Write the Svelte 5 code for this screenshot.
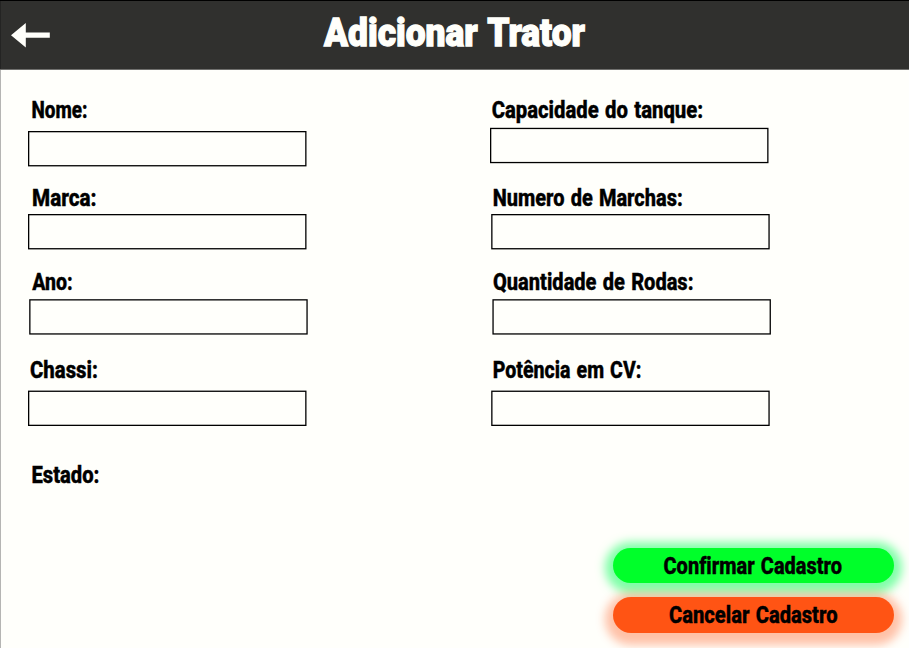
<script>
  const columns = [
    [
      { label: 'Nome:', lx: 31.5, lw: 56, bx: 28, by: 41 },
      { label: 'Marca:', lx: 32, lw: 64.5, bx: 28, by: 36 },
      { label: 'Ano:', lx: 32.3, lw: 40.5, bx: 29.2, by: 37.2 },
      { label: 'Chassi:', lx: 30, lw: 68, bx: 28, by: 40.6 },
      { label: 'Estado:', lx: 31.5, lw: 68 }
    ],
    [
      { label: 'Capacidade do tanque:', lx: 37.7, lw: 211.5, bx: 36, by: 37.8 },
      { label: 'Numero de Marchas:', lx: 38.7, lw: 190, bx: 37.2, by: 36 },
      { label: 'Quantidade de Rodas:', lx: 39, lw: 200.5, bx: 38.4, by: 37.2 },
      { label: 'Potência em CV:', lx: 38.7, lw: 148.8, bx: 37.2, by: 40.6 }
    ]
  ];
</script>

<main>
  <header>
    <svg class="back" width="40" height="26" viewBox="0 0 40 26" role="img" aria-label="Voltar">
      <path d="M0 12.2 L14.8 0 V9.4 H38.8 V14.8 H14.8 V24.4 Z" />
    </svg>
    <h1>
      <svg width="264" height="44">
        <text class="title" x="1" y="34" textLength="261" lengthAdjust="spacingAndGlyphs">Adicionar Trator</text>
      </svg>
    </h1>
  </header>

  <form>
    {#each columns as fields}
      <div class="column">
        {#each fields as f}
          <svg class="field" width="320" height="80">
            <text x={f.lx} y="27.7" textLength={f.lw} lengthAdjust="spacingAndGlyphs">{f.label}</text>
            {#if f.bx}
              <rect x={f.bx + 0.65} y={f.by + 0.65} width="277.2" height="34.1" />
            {/if}
          </svg>
        {/each}
      </div>
    {/each}
  </form>

  <div class="actions">
    <button class="confirm" type="button">
      <svg width="180" height="35"><text x="0.5" y="26.3" textLength="178.5" lengthAdjust="spacingAndGlyphs">Confirmar Cadastro</text></svg>
    </button>
    <button class="cancel" type="button">
      <svg width="170" height="35"><text x="1" y="26.3" textLength="168.5" lengthAdjust="spacingAndGlyphs">Cancelar Cadastro</text></svg>
    </button>
  </div>
</main>

<style>
  :global(body) { margin: 0; }
  main {
    box-sizing: border-box;
    width: 909px;
    height: 648px;
    display: flex;
    flex-direction: column;
    overflow: hidden;
    background: linear-gradient(to right, #b5b5b3 1px, #fffffb 1px);
    font-family: Roboto, "Liberation Sans Narrow", sans-serif;
  }
  header {
    box-sizing: border-box;
    flex: none;
    height: 70px;
    display: flex;
    align-items: flex-start;
    background: #30302e;
    border-top: 1px solid #000;
    border-bottom: 1px solid #70706e;
    box-shadow: inset 1px 0 #242423;
  }
  .back { margin: 22px 0 0 11px; fill: #fffffb; }
  h1 { margin: 11px 0 0 272px; font-size: 38px; line-height: 0; }
  svg { display: block; overflow: visible; }
  text {
    font-size: 24px;
    font-weight: 800;
    font-variant-ligatures: none;
    word-spacing: 1.5px;
    fill: #000;
    stroke: #000;
    stroke-width: 0.4px;
  }
  .title {
    font-size: 38.5px;
    font-weight: 900;
    word-spacing: 2px;
    fill: #fffffb;
    stroke: #fffffb;
    stroke-width: 1.3px;
  }
  form {
    flex: none;
    height: 457.6px;
    box-sizing: content-box;
    padding-top: 20px;
    display: grid;
    grid-template-columns: 454px 454px;
  }
  .column {
    display: grid;
    grid-template-rows: 88px 84px 88px 105px 80px;
  }
  rect { fill: none; stroke: #000; stroke-width: 1.3px; }
  .actions {
    display: flex;
    flex-direction: column;
    gap: 14px;
    align-self: flex-end;
    margin-right: 15px;
  }
  button {
    width: 281.5px;
    height: 35.5px;
    padding: 0;
    border: 0;
    border-radius: 18px;
    display: flex;
    justify-content: center;
    align-items: flex-start;
    font: inherit;
  }
  .confirm {
    position: relative;
    z-index: 1;
    background: #00ff2a;
    box-shadow: 0 2px 10px 8px rgba(0, 255, 85, 0.5);
  }
  .cancel {
    position: relative;
    z-index: 2;
    background: #ff5414;
    box-shadow: 0 4px 10px 8px rgba(255, 84, 20, 0.36);
  }
</style>
